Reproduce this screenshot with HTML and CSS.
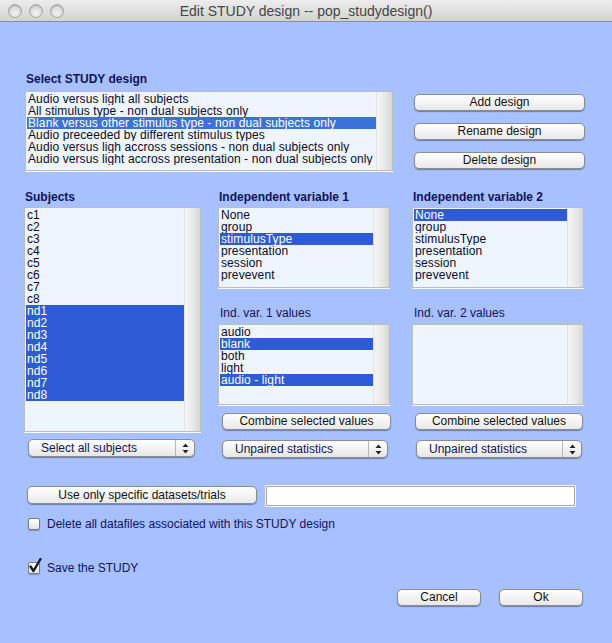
FILE: index.html
```html
<!DOCTYPE html>
<html>
<head>
<meta charset="utf-8">
<title>Edit STUDY design -- pop_studydesign()</title>
<link rel="stylesheet" href="styles.css">
</head>
<body>
<div class="window">
  <div class="titlebar">
    <div class="lights"><span class="light"></span><span class="light"></span><span class="light"></span></div>
    <div class="title">Edit STUDY design -- pop_studydesign()</div>
    <div></div>
  </div>
  <div class="content">
    <div class="label bold design-label">Select STUDY design</div>
    <div class="design-row">
      <div class="listbox design-list">
        <div class="items">
          <div class="item">Audio versus light all subjects</div>
          <div class="item">All stimulus type - non dual subjects only</div>
          <div class="item sel focus">Blank versus other stimulus type - non dual subjects only</div>
          <div class="item">Audio preceeded by different stimulus types</div>
          <div class="item">Audio versus ligh accross sessions - non dual subjects only</div>
          <div class="item">Audio versus light accross presentation - non dual subjects only</div>
        </div>
        <div class="track"></div>
      </div>
      <div class="design-buttons">
        <div class="btn">Add design</div>
        <div class="btn">Rename design</div>
        <div class="btn">Delete design</div>
      </div>
    </div>

    <div class="columns">
      <div class="col col1">
        <div class="label bold col-label">Subjects</div>
        <div class="listbox subj-list">
          <div class="items">
            <div class="item">c1</div>
            <div class="item">c2</div>
            <div class="item">c3</div>
            <div class="item">c4</div>
            <div class="item">c5</div>
            <div class="item">c6</div>
            <div class="item">c7</div>
            <div class="item">c8</div>
            <div class="item sel">nd1</div>
            <div class="item sel">nd2</div>
            <div class="item sel">nd3</div>
            <div class="item sel">nd4</div>
            <div class="item sel">nd5</div>
            <div class="item sel">nd6</div>
            <div class="item sel">nd7</div>
            <div class="item sel">nd8</div>
          </div>
          <div class="track"></div>
        </div>
        <div class="popup popup1"><span class="popup-text">Select all subjects</span><span class="arrows"><svg width="7" height="11" viewBox="0 0 7 11"><path d="M3.5 0.5 L6.5 4 L0.5 4 Z M3.5 10.5 L6.5 7 L0.5 7 Z" fill="#222"/></svg></span></div>
      </div>

      <div class="col col2">
        <div class="label bold col-label">Independent variable 1</div>
        <div class="listbox var-list">
          <div class="items">
            <div class="item">None</div>
            <div class="item">group</div>
            <div class="item sel">stimulusType</div>
            <div class="item">presentation</div>
            <div class="item">session</div>
            <div class="item">prevevent</div>
          </div>
          <div class="track"></div>
        </div>
        <div class="label col-sublabel">Ind. var. 1 values</div>
        <div class="listbox val-list">
          <div class="items">
            <div class="item">audio</div>
            <div class="item sel">blank</div>
            <div class="item">both</div>
            <div class="item">light</div>
            <div class="item sel">audio - light</div>
          </div>
          <div class="track"></div>
        </div>
        <div class="btn combine combine2">Combine selected values</div>
        <div class="popup popup2"><span class="popup-text">Unpaired statistics</span><span class="arrows"><svg width="7" height="11" viewBox="0 0 7 11"><path d="M3.5 0.5 L6.5 4 L0.5 4 Z M3.5 10.5 L6.5 7 L0.5 7 Z" fill="#222"/></svg></span></div>
      </div>

      <div class="col col3">
        <div class="label bold col-label">Independent variable 2</div>
        <div class="listbox var-list">
          <div class="items">
            <div class="item sel">None</div>
            <div class="item">group</div>
            <div class="item">stimulusType</div>
            <div class="item">presentation</div>
            <div class="item">session</div>
            <div class="item">prevevent</div>
          </div>
          <div class="track"></div>
        </div>
        <div class="label col-sublabel">Ind. var. 2 values</div>
        <div class="listbox val-list">
          <div class="items"></div>
          <div class="track"></div>
        </div>
        <div class="btn combine combine3">Combine selected values</div>
        <div class="popup popup3"><span class="popup-text">Unpaired statistics</span><span class="arrows"><svg width="7" height="11" viewBox="0 0 7 11"><path d="M3.5 0.5 L6.5 4 L0.5 4 Z M3.5 10.5 L6.5 7 L0.5 7 Z" fill="#222"/></svg></span></div>
      </div>
    </div>

    <div class="specific-row">
      <div class="btn specific-btn">Use only specific datasets/trials</div>
      <div class="textbox"></div>
    </div>

    <div class="check-row delete-row">
      <span class="checkbox"></span>
      <span class="check-label">Delete all datafiles associated with this STUDY design</span>
    </div>

    <div class="check-row save-row">
      <span class="checkbox checked"><svg class="tick" width="14" height="16" viewBox="0 0 14 16"><path d="M2.5 8.5 L5.5 13 L12.5 1" fill="none" stroke="#1a1a1a" stroke-width="2.4" stroke-linecap="round" stroke-linejoin="round"/></svg></span>
      <span class="check-label">Save the STUDY</span>
    </div>

    <div class="footer">
      <div class="btn footer-btn">Cancel</div>
      <div class="btn footer-btn">Ok</div>
    </div>
  </div>
</div>
</body>
</html>
```

FILE: styles.css
```css
* { box-sizing: border-box; }
html, body { margin: 0; padding: 0; }
body {
  width: 612px;
  height: 643px;
  overflow: hidden;
  background: #a7c0ff;
  font-family: "Liberation Sans", Arial, sans-serif;
  font-size: 12px;
}
.window {
  width: 612px;
  height: 643px;
  background: #a7c0ff;
}

/* title bar */
.titlebar {
  height: 22px;
  display: grid;
  grid-template-columns: 1fr auto 1fr;
  align-items: center;
  background: linear-gradient(#ededed, #d2d2d2);
  border-bottom: 1px solid #8e8e8e;
}
.lights {
  display: flex;
  gap: 7px;
  padding-left: 8px;
}
.light {
  width: 14px;
  height: 14px;
  border-radius: 50%;
  border: 1px solid #a5a5a5;
  background: radial-gradient(circle at 50% 70%, #f4f4f4 0%, #dcdcdc 55%, #c2c2c2 100%);
  box-shadow: inset 0 1px 1px rgba(0,0,0,0.15);
}
.title {
  font-size: 14px;
  color: #454545;
  padding-top: 1px;
}

.content {
  padding-top: 50px;
}

.label {
  color: #12125a;
  line-height: 14px;
  height: 14px;
  white-space: nowrap;
}
.bold { font-weight: bold; }

.design-label { margin-left: 26px; }

.design-row {
  display: flex;
  margin-top: 5px;
}

/* listboxes */
.listbox {
  display: flex;
  background: #eef5ff;
  border: 1px solid #bdbdbd;
  padding: 1px 0 1px 1px;
  box-shadow: 0 1px 0 #f6f8ff;
  color: #0a0a2a;
}
.items {
  flex: 1;
  min-width: 0;
}
.item {
  height: 12px;
  line-height: 12px;
  padding-left: 1px;
  white-space: nowrap;
  overflow: hidden;
  letter-spacing: 0.1px;
}
.item.sel {
  background: #2f5bd6;
  color: #fff;
}
.item.sel.focus {
  background: #3a72d9;
}
.track {
  width: 16px;
  margin-top: -1px;
  margin-bottom: -1px;
  background: linear-gradient(to right, #f5f5f5, #e6e6e6 60%, #d6d6d6);
  border-left: 1px solid #e2e2e2;
}

.design-list {
  margin-left: 25px;
  width: 368px;
  height: 80px;
}

.design-buttons {
  margin-left: 21px;
  width: 171px;
  padding-top: 3px;
  display: flex;
  flex-direction: column;
  gap: 12px;
}

/* buttons */
.btn {
  height: 17px;
  line-height: 15px;
  text-align: center;
  color: #111;
  background: linear-gradient(#ffffff, #f4f4f4 50%, #e8e8e8);
  border: 1px solid #8c8c8c;
  border-radius: 5px;
  box-shadow: 0 1px 1px rgba(40,40,80,0.45);
  white-space: nowrap;
}

/* three columns */
.columns {
  display: flex;
  margin-top: 19px;
  padding-left: 24px;
}
.col {
  display: flex;
  flex-direction: column;
}
.col1 { width: 177px; }
.col2 { width: 172px; margin-left: 17px; }
.col3 { width: 172px; margin-left: 22px; }
.col-label { margin-left: 1px; }
.col-sublabel { margin-left: 2px; margin-top: 18px; }

.subj-list {
  margin-top: 3px;
  height: 225px;
}
.var-list {
  margin-top: 3px;
  height: 81px;
}
.val-list {
  margin-top: 4px;
  height: 81px;
  padding-top: 1px;
}

.combine { margin-top: 8px; width: 169px; }
.combine2 { margin-left: 4px; }
.combine3 { margin-left: 3px; width: 168px; }

/* popups */
.popup {
  height: 18px;
  width: 166px;
  display: flex;
  align-items: stretch;
  background: linear-gradient(#ffffff, #f3f3f3 50%, #e6e6e6);
  border: 1px solid #8c8c8c;
  border-radius: 5px;
  box-shadow: 0 1px 1px rgba(40,40,80,0.45);
  color: #12125a;
}
.popup1 { margin-top: 7px; margin-left: 4px; width: 167px; }
.popup2 { margin-top: 10px; margin-left: 4px; }
.popup3 { margin-top: 10px; margin-left: 4px; }
.popup-text {
  flex: 1;
  line-height: 16px;
  padding-left: 12px;
  white-space: nowrap;
}
.arrows {
  width: 19px;
  border-left: 1px solid #b8b8b8;
  display: flex;
  align-items: center;
  justify-content: center;
}
.arrows svg { display: block; }

/* specific datasets */
.specific-row {
  display: flex;
  align-items: flex-start;
  margin-top: 28px;
  padding-left: 27px;
}
.specific-btn {
  width: 230px;
  height: 18px;
  line-height: 16px;
}
.textbox {
  margin-left: 9px;
  width: 309px;
  height: 20px;
  background: #fff;
  border: 1px solid #a9a9a9;
  box-shadow: 0 0 0 1px #f8f8f8;
}

/* checkboxes */
.check-row {
  display: flex;
  align-items: center;
  height: 14px;
  padding-left: 28px;
}
.delete-row { margin-top: 11px; }
.save-row { margin-top: 30px; }
.checkbox {
  position: relative;
  width: 12px;
  height: 12px;
  border: 1px solid #7c7c7c;
  border-radius: 2px;
  background: linear-gradient(#ffffff, #e4e4e4);
  box-shadow: 0 1px 1px rgba(0,0,0,0.25);
}
.tick {
  position: absolute;
  left: -1px;
  top: -5px;
}
.check-label {
  margin-left: 7px;
  color: #12125a;
  line-height: 14px;
  white-space: nowrap;
}

/* footer */
.footer {
  display: flex;
  justify-content: flex-end;
  gap: 18px;
  margin-top: 14px;
  padding-right: 29px;
}
.footer-btn {
  width: 84px;
  height: 17px;
}
```
